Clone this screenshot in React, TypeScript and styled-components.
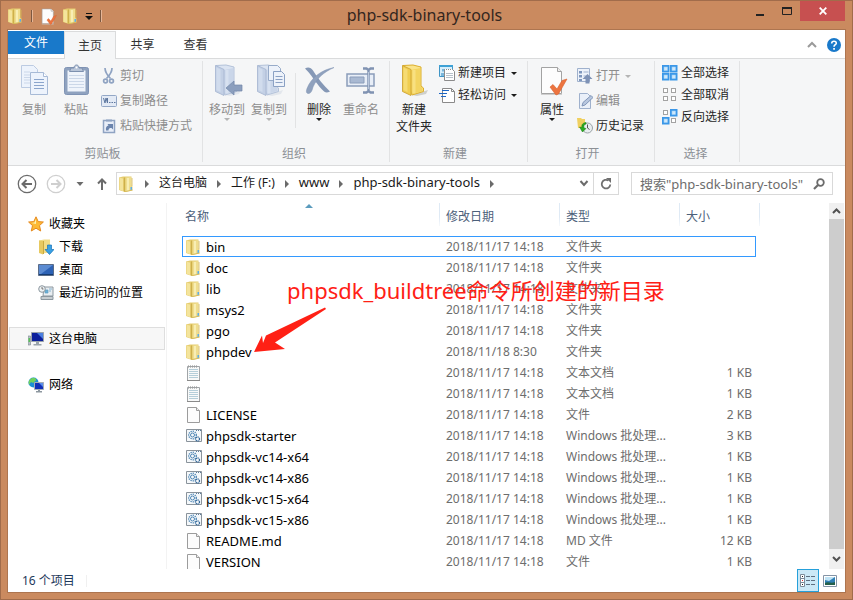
import React from "react";
import styled, { createGlobalStyle, css } from "styled-components";

const GlobalStyle = createGlobalStyle`
  * { box-sizing: border-box; }
  body {
    margin: 0;
    font-family: "Noto Sans", "Noto Sans CJK SC", sans-serif;
    font-size: 12px;
    line-height: 16px;
    color: #000;
  }
  button, input { font: inherit; color: inherit; }
  button { background: none; border: 0; padding: 0; margin: 0; }
  svg { display: block; flex: none; }
`;

/* ---------- window frame ---------- */

const Window = styled.div`
  height: 100vh;
  display: flex;
  flex-direction: column;
  background: #ca8a5f;
  border: 1px solid #a16c4b;
  padding: 0 7px 7px;
  overflow: hidden;
`;

const TitleBar = styled.header`
  display: grid;
  grid-template-columns: 1fr auto 1fr;
  height: 29px;
  flex: none;
`;

const QuickAccess = styled.div`
  display: flex;
  align-items: center;
  gap: 6px;
`;

const QuickDivider = styled.span`
  width: 1px;
  height: 12px;
  margin: 0 1px;
  background: #7d5840;
  box-shadow: 1px 0 #e6b697;
`;

const Title = styled.h1`
  margin: 0;
  padding-right: 4px;
  font-size: 16px;
  font-weight: 400;
  line-height: 28px;
  color: #33261e;
`;

const Caption = styled.div`
  display: flex;
  justify-content: flex-end;
  align-items: flex-start;
`;

const CaptionButton = styled.button<{ $close?: boolean }>`
  width: ${(p) => (p.$close ? 45 : 27)}px;
  height: 20px;
  display: flex;
  align-items: center;
  justify-content: center;
  background: ${(p) => (p.$close ? "#c75050" : "transparent")};
`;

const Client = styled.div`
  flex: 1;
  min-height: 0;
  display: flex;
  flex-direction: column;
  background: #fff;
  outline: 1px solid #ad7550;
`;

/* ---------- ribbon ---------- */

const Tabs = styled.nav`
  display: flex;
  height: 27px;
  flex: none;
  margin-top: 1px;
`;

const FileTab = styled.button`
  width: 56px;
  height: 23px;
  background: #1979ca;
  color: #fff;
`;

const Tab = styled.button<{ $active?: boolean }>`
  width: ${(p) => (p.$active ? 52 : 53)}px;
  height: 28px;
  color: #333;
  ${(p) =>
    p.$active &&
    css`
      background: #f5f6f7;
      border: 1px solid #dadbdc;
      border-bottom: 0;
      z-index: 1;
    `}
`;

const TabTools = styled.div`
  display: flex;
  align-items: center;
  gap: 10px;
  margin-left: auto;
  padding-right: 4px;
`;

const Ribbon = styled.section`
  display: flex;
  flex: none;
  height: 108px;
  background: #f5f6f7;
  border-top: 1px solid #dadbdc;
  border-bottom: 1px solid #dadbdc;
  padding: 2px 0 3px;
`;

const Group = styled.div<{ $start?: number; $end?: number }>`
  display: flex;
  flex-direction: column;
  justify-content: space-between;
  border-right: 1px solid #e2e3e4;
  padding: 0 ${(p) => p.$end ?? 10}px 0 ${(p) => p.$start ?? 3}px;
`;

const GroupBody = styled.div`
  display: flex;
  align-items: flex-start;
`;

const GroupLabel = styled.div`
  text-align: center;
  color: #8c9095;
`;

const GroupDivider = styled.span`
  width: 1px;
  height: 55px;
  margin: 12px 2px 0 5px;
  background: #e2e3e4;
`;

const LargeButton = styled.button<{ $off?: boolean }>`
  width: 42px;
  display: flex;
  flex-direction: column;
  align-items: center;
  padding-top: 3px;
  gap: 5px;
  line-height: 17px;
  white-space: nowrap;
  color: ${(p) => (p.$off ? "#8d8d8d" : "#262626")};
`;

const LargeLabel = styled.span`
  display: flex;
  flex-direction: column;
  align-items: center;
`;

const SmallStack = styled.div<{ $loose?: boolean; $alone?: boolean }>`
  display: flex;
  flex-direction: column;
  gap: ${(p) => (p.$loose ? 9 : 6)}px;
  padding-top: ${(p) => (p.$loose ? 7 : 4)}px;
  padding-left: ${(p) => (p.$alone ? 0 : 4)}px;
`;

const SmallButton = styled.button<{ $off?: boolean }>`
  display: flex;
  align-items: center;
  gap: 3px;
  height: 16px;
  white-space: nowrap;
  color: ${(p) => (p.$off ? "#8d8d8d" : "#262626")};
`;

const Arrow = styled.svg`
  margin-left: 2px;
`;

/* ---------- address row ---------- */

const AddressRow = styled.div`
  display: flex;
  align-items: center;
  flex: none;
  height: 37px;
  padding: 0 12px 2px 9px;
`;

const RoundNav = styled.div`
  display: flex;
  align-items: center;
  gap: 9px;
  margin-right: 8px;
`;

const IconButton = styled.button`
  display: flex;
  align-items: center;
  justify-content: center;
`;

const AddressBox = styled.div`
  flex: 1;
  min-width: 0;
  height: 23px;
  display: flex;
  align-items: stretch;
  border: 1px solid #d9d9d9;
  padding-left: 2px;
  font-size: 13px;
`;

const Crumbs = styled.ol`
  flex: 1;
  display: flex;
  align-items: center;
  list-style: none;
  margin: 0;
  padding: 0;
`;

const Crumb = styled.li`
  display: flex;
  align-items: center;
`;

const CrumbLink = styled.a<{ $cjk?: boolean }>`
  font-size: ${(p) => (p.$cjk ? 12 : 13)}px;
  line-height: 19px;
  padding-bottom: 2px;
  color: #1a1a1a;
  text-decoration: none;
  white-space: nowrap;
`;

const CrumbArrow = styled.svg`
  margin: 0 9px;
`;

const BoxButton = styled(IconButton)<{ $ruled?: boolean }>`
  width: ${(p) => (p.$ruled ? 25 : 18)}px;
  border-left: ${(p) => (p.$ruled ? "1px solid #d9d9d9" : "0")};
`;

const SearchBox = styled.label`
  display: flex;
  align-items: center;
  width: 202px;
  height: 23px;
  margin-left: 12px;
  padding: 0 7px 0 8px;
  border: 1px solid #d9d9d9;
  input {
    flex: 1;
    min-width: 0;
    border: 0;
    padding: 0;
    outline: 0;
    background: none;
    font-size: 13px;
  }
  input::placeholder { color: #6d6d6d; opacity: 1; }
`;

/* ---------- main area ---------- */

const Main = styled.main`
  flex: 1;
  min-height: 0;
  display: flex;
  padding-right: 1px;
`;

const SidePane = styled.nav`
  width: 159px;
  flex: none;
  padding: 9px 1px 0;
  border-right: 1px solid #f3f3f3;
  display: flex;
  flex-direction: column;
  gap: 23px;
`;

const TreeList = styled.div`
  display: flex;
  flex-direction: column;
`;

const TreeItem = styled.a<{ $child?: boolean; $selected?: boolean }>`
  display: flex;
  align-items: center;
  gap: 5px;
  height: 23px;
  padding-left: ${(p) => (p.$child ? 28 : 18)}px;
  border: 1px solid ${(p) => (p.$selected ? "#dedede" : "transparent")};
  background: ${(p) => (p.$selected ? "#f7f7f7" : "transparent")};
  color: #000;
  text-decoration: none;
  white-space: nowrap;
`;

const ListPane = styled.section`
  position: relative;
  flex: 1;
  min-width: 0;
  overflow: hidden;
  padding-left: 15px;
`;

const FileTable = styled.table`
  width: 574px;
  table-layout: fixed;
  border-collapse: collapse;
  line-height: 14px;
`;

const HeadCell = styled.th<{ $w: number; $first?: boolean; $last?: boolean }>`
  position: relative;
  width: ${(p) => p.$w}px;
  height: 33px;
  padding: 7px 0 0 ${(p) => (p.$first ? 3 : 6)}px;
  vertical-align: top;
  text-align: left;
  font-weight: 400;
  color: #4c607a;
  &::after {
    content: "";
    position: absolute;
    top: 0;
    right: ${(p) => (p.$last ? -4 : 0)}px;
    width: 1px;
    height: 23px;
    background: linear-gradient(#dfeaf5 60%, #f6f9fc);
  }
`;

const SortMark = styled.svg`
  position: absolute;
  top: 1px;
  left: 123px;
`;

const FileRow = styled.tr<{ $focused?: boolean }>`
  height: 21px;
  ${(p) =>
    p.$focused &&
    css`
      outline: 1px solid #3399ff;
      outline-offset: -1px;
    `}
`;

const Cell = styled.td<{ $right?: boolean }>`
  padding: 0 ${(p) => (p.$right ? 4 : 0)}px 0 6px;
  color: #6d6d6d;
  text-align: ${(p) => (p.$right ? "right" : "left")};
  white-space: nowrap;
`;

const NameCell = styled.td`
  padding: 0 0 0 4px;
`;

const FileName = styled.span`
  display: flex;
  align-items: center;
  gap: 4px;
  font-size: 13px;
`;

const Note = styled.p`
  position: absolute;
  left: 120px;
  top: 73px;
  margin: 0;
  font-size: 22px;
  line-height: 28px;
  color: #ff2015;
  white-space: nowrap;
`;

const NoteArrow = styled.svg`
  position: absolute;
  left: 85px;
  top: 101px;
`;

const ScrollBar = styled.div`
  width: 15px;
  display: flex;
  flex-direction: column;
  background: #f0f0f0;
`;

const ScrollButton = styled(IconButton)<{ $end?: boolean }>`
  height: ${(p) => (p.$end ? 20 : 16)}px;
`;

const ScrollThumb = styled.div`
  flex: 1;
  background: #cdcdcd;
`;

const StatusBar = styled.footer`
  display: flex;
  align-items: center;
  flex: none;
  height: 23px;
  padding: 0 4px 0 14px;
  color: #1e395b;
`;

const StatusText = styled.span`
  padding-right: 11px;
  border-right: 1px solid #f0f0f0;
  line-height: 12px;
`;

const ViewButtons = styled.div`
  margin-left: auto;
  display: flex;
`;

const ViewButton = styled(IconButton)<{ $on?: boolean }>`
  width: 22px;
  height: 23px;
  border: 1px solid ${(p) => (p.$on ? "#26a0da" : "transparent")};
  background: ${(p) => (p.$on ? "#cbe8f6" : "transparent")};
`;

/* ---------- icons ---------- */

const FolderIcon = () => (
  <svg width="16" height="16" viewBox="0 0 16 16">
    <path d="M0 1.500 4 .5h8.500v9l1 1v4L6 16 0 14z" fill="#e6cd70" />
    <path d="M6.500 1.500 12 1v9l1 1v3l-6.500 1.500z" fill="#efdd8e" />
    <path d="M9 2v12.500" stroke="#f8eeb4" strokeWidth="2" />
    <path d="M.5 1.800 4 2.600V15L.5 13.800z" fill="#f4e49c" />
    <path d="M5.500 1.500v14.200" stroke="#cdb04a" strokeWidth="1.200" />
    <path d="M11.500 11h1.500v2.800l-1.500.4z" fill="#5badea" />
    <path d="m6 15.700 7.500-1.700M13 2v8" fill="none" stroke="#d3b655" strokeWidth=".8" />
  </svg>
);

const BigFolder = ({ off, children }: { off?: boolean; children?: React.ReactNode }) => {
  const c = off
    ? ["#c3d0e5", "#dbe4f2", "#b3c2d9", "#a3b4cf"]
    : ["#f0cd50", "#fae48a", "#dcae2c", "#c99d2b"];
  return (
    <svg width="32" height="32" viewBox="0 0 32 32">
      <path d="M14 31 30 26l-2 4-9 2z" fill={off ? "#e3e7ed" : "#cfd0cc"} />
      <path d="M5 1.500 15 1l8 2v19l2.500 2v3.500L14 31z" fill={c[1]} stroke={c[2]} />
      <path d="m13 6 9.500-2v18l2 2v3L13 30.500z" fill={c[0]} opacity=".7" />
      <path d="M16 6v23" stroke={c[1]} strokeWidth="3" opacity=".8" />
      <path d="m4.500 1.500 8.500 4V31.500l-8.500-4z" fill={c[0]} stroke={c[3]} strokeWidth=".8" />
      <path d="m5.500 3.500 4 2v22.500l-4-2z" fill={c[1]} opacity=".6" />
      {children}
    </svg>
  );
};

const CopyIcon = () => (
  <svg width="32" height="32" viewBox="0 0 32 32" stroke="#a7bad6" fill="#edf3fc">
    <path d="M3.500 1.500h12l4 4v18h-16z" stroke="#bccbe2" />
    <path d="M6 8h6M6 11h6M6 13.500h6M6 16h6M6 19h6" stroke="#cbd7e9" />
    <path d="M12.500 8.500h13l4 4v18h-17z" />
    <path d="M25.500 8.500v4h4" fill="#fff" />
    <path d="M16 15.500h10M16 18.500h10M16 21.500h10M16 24.500h10" stroke="#8ba5cc" />
  </svg>
);

const PasteIcon = () => (
  <svg width="32" height="32" viewBox="0 0 32 32">
    <rect x="4.500" y="3.500" width="24" height="27" rx="2" fill="#8fa2bf" stroke="#7f93b4" />
    <path d="M7.500 6.500h18v21h-18z" fill="#eff4fb" />
    <path d="M9 11.500h15M9 14.500h15M9 17.500h15M9 20.500h15M9 23.500h15" stroke="#cbd7e8" />
    <path d="M9.500 7.500 11 4h3c0-4 5-4 5 0h3l1.500 3.500z" fill="#b8c5d8" stroke="#7c90af" />
    <circle cx="16.500" cy="3.500" r="1" fill="#fff" />
  </svg>
);

const CutIcon = () => (
  <svg width="16" height="16" viewBox="0 0 16 16" fill="none" stroke="#8fa3c2" strokeWidth="1.700">
    <path d="M4 0c0 4 2 7 5.500 10.500M11 0c0 4-2 7-5.500 10.500" />
    <circle cx="4.500" cy="13" r="1.900" />
    <circle cx="10.500" cy="13" r="1.900" />
  </svg>
);

const PathIcon = () => (
  <svg width="16" height="16" viewBox="0 0 16 16" fill="none">
    <rect x=".5" y="2.500" width="15" height="11" rx="1" fill="#e3eaf5" stroke="#93a7c6" />
    <path d="m2.500 5 1.500 5 1-5 1.500 5V5" stroke="#5d779f" />
    <path d="M8 9.500h1.500M10.500 9.500H12M13 9.500h1.500" stroke="#5d779f" />
  </svg>
);

const ShortcutIcon = () => (
  <svg width="16" height="16" viewBox="0 0 16 16">
    <path d="M2.500 2.500h11v12h-11z" fill="#e8eef8" stroke="#8fa3c2" strokeWidth="1.500" />
    <path d="M5 1.500h6v2H5z" fill="#8fa3c2" />
    <path d="M5 12.500c-.5-3 .5-4.500 2.500-5L6.500 6H12v5.500l-1.500-1.500c-2 0-3 .5-3 2.500z" fill="#6b84ad" />
  </svg>
);

const DeleteIcon = () => (
  <svg width="32" height="32" viewBox="0 0 32 32">
    <path d="M2 4.500C5 2.500 8 3.500 10 6.500c5 8 10 14 17 21-4 2-5 1-8-2C12 18 8 10 2 4.500z" fill="#8598b6" />
    <path d="M31 3.500C21 8 14 14 10 23c-1 4-2 6-4 6.500-3 0-3-2-2-5C8 14 18 6 31 3.500z" fill="#8fa1bd" stroke="#7e92b2" strokeWidth=".5" />
  </svg>
);

const RenameIcon = () => (
  <svg width="32" height="32" viewBox="0 0 32 32" fill="none">
    <path d="M2 10h27v12H2z" fill="#e8eef7" stroke="#8b9dba" strokeWidth="1.500" />
    <path d="M5 13h14v6H5z" fill="#a9b9d2" stroke="#8b9dba" />
    <path d="M18 4.500h3.500l2 1.500 2-1.500H29M23.500 5v23M18 28.500h3.500l2-1.500 2 1.500H29" stroke="#8093b2" strokeWidth="2.400" />
    <path d="M23.500 8v17" stroke="#b8c6da" />
  </svg>
);

const NewItemIcon = () => (
  <svg width="16" height="16" viewBox="0 0 16 16">
    <path d="M.5.5h13v11H.5z" fill="#d6eefb" stroke="#3f95c6" />
    <path d="M0 0h14v2H0z" fill="#3ea1d5" />
    <path d="M3 4h3v2.500H3zM2 8h3v3H2z" fill="#7bb7dc" />
    <path d="M5.500 4.500h8l2 2v9h-10z" fill="#fff" stroke="#8b8b8b" />
    <path d="M7 8.500h7M7 10.500h7M7 12.500h7" stroke="#b7c1ca" />
    <path d="M6 4.500h7" stroke="#fff" strokeDasharray="1 1" />
  </svg>
);

const EasyIcon = () => (
  <svg width="16" height="16" viewBox="0 0 16 16">
    <path d="M3.500 1.500h9l3 3v11h-12z" fill="#fff" stroke="#8a8a8a" />
    <path d="M12.500 1.500v3h3" fill="none" stroke="#8a8a8a" />
    <path d="M3 3.500h7M0 6.500h8M2 9.500h5" stroke="#1c66c4" />
  </svg>
);

const PropsIcon = ({ size = 32 }: { size?: number }) => (
  <svg width={size} height={size} viewBox="0 0 32 32">
    <path d="M5 30.500h21" stroke="#cfcfcf" />
    <path d="M5.500 3.500h16l4 4v22h-20z" fill="#fdfdfd" stroke="#a3a3a3" />
    <path d="M21.500 3.500v4h4" fill="#eee" stroke="#a3a3a3" />
    <path d="m14 23 3-2.500 4 4.500 5-8.500 5-1.500-8.500 15-2.500 1z" fill="#ec7440" stroke="#d9602b" strokeWidth=".6" />
  </svg>
);

const OpenIcon = () => (
  <svg width="16" height="16" viewBox="0 0 16 16">
    <path d="M.5.5h12v13H.5z" fill="#edf2fa" stroke="#9fb1cd" />
    <path d="M2 3h3v2.500H2zM2 7h3v2.500H2zM2 11h3v2H2z" fill="#7f97bd" />
    <path d="M6.500 4h5M6.500 8h3" stroke="#9fb1cd" />
    <path d="m10.500 6 5 5h-3v4.500h-4V11h-3z" fill="#7e92b6" />
  </svg>
);

const EditIcon = () => (
  <svg width="16" height="16" viewBox="0 0 16 16">
    <path d="M2.500.5h8l3 3v12h-11z" fill="#eaf0f9" stroke="#9fb1cd" />
    <path d="m5 13 1-3.500 8-7 2 2-8 7.500z" fill="#b8c7df" stroke="#8196b9" />
  </svg>
);

const HistoryIcon = () => (
  <svg width="16" height="16" viewBox="0 0 16 16">
    <path d="M0 0h4l1 1h3v9H1z" fill="#f0d060" />
    <circle cx="10.500" cy="10" r="5" fill="#e9eef0" stroke="#9ba3a6" />
    <path d="M10.500 6.500V10l2 1.500" fill="none" stroke="#555" />
    <path d="M9 4.500C5 5 4.500 7.500 5 9.500L2.500 9l3 5 3.500-3.500-2-.5c-.5-2 0-3.500 2-4z" fill="#2cab23" stroke="#12780f" strokeWidth=".5" />
  </svg>
);

type Cells = [boolean, boolean, boolean, boolean];
const SelectIcon = ({ on }: { on: Cells }) => (
  <svg width="16" height="16" viewBox="0 0 16 16">
    {on.map((lit, i) => {
      const x = (i % 2) * 8;
      const y = i < 2 ? 0 : 8;
      return lit ? (
        <g key={i}>
          <rect x={x} y={y} width="7.500" height="7.500" fill="#3b97e8" />
          <rect x={x + 2} y={y + 2} width="3.500" height="3.500" fill="#cfe8fb" stroke="#9dd0f5" strokeWidth=".6" />
        </g>
      ) : (
        <rect key={i} x={x + 1.500} y={y + 1.500} width="4" height="4" fill="#fff" stroke="#a3a3a3" />
      );
    })}
  </svg>
);

const Caret = ({ off }: { off?: boolean }) => (
  <svg width="6" height="3" viewBox="0 0 6 3">
    <path d="M0 0h6L3 3z" fill={off ? "#b4b4b4" : "#1c1c1c"} />
  </svg>
);

const InlineCaret = ({ off }: { off?: boolean }) => (
  <Arrow width="6" height="3" viewBox="0 0 6 3">
    <path d="M0 0h6L3 3z" fill={off ? "#b4b4b4" : "#1c1c1c"} />
  </Arrow>
);

const NavCircle = ({ off, flip }: { off?: boolean; flip?: boolean }) => (
  <svg width="20" height="20" viewBox="0 0 20 20" fill="none" stroke={off ? "#cfcfcf" : "#6b6b6b"}>
    <circle cx="10" cy="10" r="8.700" strokeWidth="1.300" />
    <path d={flip ? "M5 10h9M10.500 6l4 4-4 4" : "M15 10H6M9.500 6l-4 4 4 4"} strokeWidth="2" />
  </svg>
);

const StarIcon = () => (
  <svg width="16" height="16" viewBox="0 0 16 16">
    <path d="m8 .8 2.200 4.800 5.200.4-3.900 3.600 1.200 5.400L8 12.200 3.300 15l1.200-5.400L.6 6l5.200-.4z" fill="#fdb935" stroke="#e58a20" />
    <path d="M8 3v5L3.500 7l3-.6z" fill="#fff0b0" />
  </svg>
);

const DownloadIcon = () => (
  <svg width="16" height="16" viewBox="0 0 16 16">
    <path d="M1 1.500 6 .5h6v13l-8 1z" fill="#f1dc87" />
    <path d="M1 1.500 5 2v13.500L1 14z" fill="#e7c960" />
    <path d="M5.500 2v13" stroke="#c9a940" />
    <path d="M9.500 6h4v4.500H16l-4.500 5-4.500-5h2.500z" fill="#39a0e4" stroke="#1973b8" strokeWidth=".7" />
  </svg>
);

const DesktopIcon = () => (
  <svg width="16" height="16" viewBox="0 0 16 16">
    <path d="M.5 2.500h15v11H.5z" fill="#2d62b5" stroke="#5a6c88" />
    <path d="M1 3h14L3 12H1z" fill="#5b8bd2" />
    <path d="M1 12.500h14" stroke="#153c73" />
  </svg>
);

const RecentIcon = () => (
  <svg width="16" height="16" viewBox="0 0 16 16">
    <path d="M6 2h9v9H5z" fill="#e8edf1" stroke="#8c979f" />
    <path d="M7 5h3v3H7zM11 4h3M11 6h2" fill="#6ab0d6" stroke="#5f9fc3" strokeWidth=".7" />
    <path d="M3 11.500h12v3H3z" fill="#c7cdd1" stroke="#8c979f" />
    <circle cx="4" cy="4" r="3.300" fill="#eef2f4" stroke="#8c979f" />
    <path d="M4 2v2h1.500" fill="none" stroke="#555" strokeWidth=".8" />
  </svg>
);

const ComputerIcon = () => (
  <svg width="16" height="16" viewBox="0 0 16 16">
    <path d="M0 5h2.500v9H0z" fill="#b8c0c6" stroke="#7a858d" strokeWidth=".6" />
    <path d="M.6 7h1.300v4H.6z" fill="#4dc04b" />
    <path d="M3.500 1.500h12v9h-12z" fill="#0c1f9c" stroke="#9aa3ab" />
    <path d="m9 2 6 0v6z" fill="#4a7ee0" />
    <path d="M8 11h3v2H8zM5.500 13h8v1.500h-8z" fill="#9aa3ab" />
  </svg>
);

const NetworkIcon = () => (
  <svg width="16" height="16" viewBox="0 0 16 16">
    <circle cx="5.500" cy="5.500" r="5" fill="#1b8fd6" />
    <path d="M3 1.500c3-2 6 0 5 2L5 6 3 5 1 8C0 5 1 3 3 1.500z" fill="#6fd15d" />
    <path d="M6.500 5.500h9v7h-9z" fill="#1130b8" stroke="#a5adb5" />
    <path d="m11 6 4 0v4z" fill="#5b8eea" />
    <path d="M10 13h2v1h-2zM8 14h6v1.500H8z" fill="#8d979f" />
  </svg>
);

const TextDocIcon = () => (
  <svg width="16" height="16" viewBox="0 0 16 16">
    <path d="M1.500 1.500h12v14h-12z" fill="#f8f9f9" stroke="#a1a5a8" />
    <path d="M3 4.500h9M3 6.500h9M3 8.500h9M3 10.500h9M3 12.500h9" stroke="#b5ced9" />
    <path d="M2.500 0v3M4.500 0v3M6.500 0v3M8.500 0v3M10.500 0v3" stroke="#9b9b9b" strokeWidth=".6" />
    <path d="M1 15.500h13" stroke="#8a8a8a" />
  </svg>
);

const BlankIcon = () => (
  <svg width="16" height="16" viewBox="0 0 16 16">
    <path d="M1.500.5h9l3 3v12h-12z" fill="#fcfcfc" stroke="#9c9c9c" />
    <path d="M10.500.5v3h3" fill="#eee" stroke="#9c9c9c" />
  </svg>
);

const BatchIcon = () => (
  <svg width="16" height="16" viewBox="0 0 16 16" fill="none">
    <path d="M.5 1.500h15v12H.5z" fill="#f5f8fa" stroke="#8a939b" />
    <path d="M10 2.500h5" stroke="#5d7e9d" strokeDasharray="1 1" />
    <circle cx="6.500" cy="7" r="3.800" stroke="#4b84b4" strokeWidth="1.300" strokeDasharray="1.300 .9" />
    <circle cx="6.500" cy="7" r="2" stroke="#4b84b4" />
    <circle cx="11.500" cy="11" r="2" stroke="#35699a" strokeWidth="1.300" strokeDasharray="1.100 .6" />
  </svg>
);

/* ---------- data ---------- */

type Kind = "folder" | "text" | "blank" | "batch";
type Entry = [kind: Kind, name: string, type: string, size: string, date?: string];

const entries: Entry[] = [
  ["folder", "bin", "文件夹", ""],
  ["folder", "doc", "文件夹", ""],
  ["folder", "lib", "文件夹", ""],
  ["folder", "msys2", "文件夹", ""],
  ["folder", "pgo", "文件夹", ""],
  ["folder", "phpdev", "文件夹", "", "2018/11/18 8:30"],
  ["text", "", "文本文档", "1 KB"],
  ["text", "", "文本文档", "1 KB"],
  ["blank", "LICENSE", "文件", "2 KB"],
  ["batch", "phpsdk-starter", "Windows 批处理...", "3 KB"],
  ["batch", "phpsdk-vc14-x64", "Windows 批处理...", "1 KB"],
  ["batch", "phpsdk-vc14-x86", "Windows 批处理...", "1 KB"],
  ["batch", "phpsdk-vc15-x64", "Windows 批处理...", "1 KB"],
  ["batch", "phpsdk-vc15-x86", "Windows 批处理...", "1 KB"],
  ["blank", "README.md", "MD 文件", "12 KB"],
  ["blank", "VERSION", "文件", "1 KB"],
];

const kindIcon: Record<Kind, React.FC> = {
  folder: FolderIcon,
  text: TextDocIcon,
  blank: BlankIcon,
  batch: BatchIcon,
};

const crumbs = ["这台电脑", "工作 (F:)", "www", "php-sdk-binary-tools"];

const CrumbMark = () => (
  <CrumbArrow width="6" height="8" viewBox="0 0 6 8">
    <path d="M1 0v8l4-4z" fill="#6a6a6a" />
  </CrumbArrow>
);

export default function App() {
  return (
    <Window>
      <GlobalStyle />
      <TitleBar>
        <QuickAccess>
          <FolderIcon />
          <QuickDivider />
          <IconButton aria-label="属性"><PropsIcon size={18} /></IconButton>
          <IconButton aria-label="新建文件夹"><FolderIcon /></IconButton>
          <IconButton aria-label="自定义快速访问工具栏">
            <svg width="8" height="8" viewBox="0 0 8 8">
              <path d="M1 1.500h6" stroke="#111" />
              <path d="M0 4h8L4 8z" fill="#111" />
            </svg>
          </IconButton>
          <QuickDivider />
        </QuickAccess>
        <Title>php-sdk-binary-tools</Title>
        <Caption>
          <CaptionButton aria-label="最小化">
            <svg width="8" height="14" viewBox="0 0 8 14"><path d="M0 11h8" stroke="#222" strokeWidth="2" /></svg>
          </CaptionButton>
          <CaptionButton aria-label="最大化">
            <svg width="10" height="8" viewBox="0 0 10 8"><path d="M.5 1h9v6.500h-9z" fill="none" stroke="#222" /><path d="M0 1h10" stroke="#222" strokeWidth="2" /></svg>
          </CaptionButton>
          <CaptionButton $close aria-label="关闭">
            <svg width="8" height="8" viewBox="0 0 8 8"><path d="m.7.7 6.600 6.600M7.300.7.7 7.300" stroke="#fff" strokeWidth="1.800" /></svg>
          </CaptionButton>
        </Caption>
      </TitleBar>

      <Client>
        <Tabs>
          <FileTab>文件</FileTab>
          <Tab $active>主页</Tab>
          <Tab>共享</Tab>
          <Tab>查看</Tab>
          <TabTools>
            <IconButton aria-label="最小化功能区">
              <svg width="10" height="7" viewBox="0 0 10 7"><path d="m1 6 4-4 4 4" fill="none" stroke="#9a9a9a" strokeWidth="2" /></svg>
            </IconButton>
            <IconButton aria-label="帮助">
              <svg width="14" height="14" viewBox="0 0 14 14">
                <circle cx="7" cy="7" r="7" fill="#1979ca" />
                <path d="M4.700 5.400C4.700 2.500 9.300 2.500 9.300 5.200 9.300 6.700 7 6.800 7 8.800" fill="none" stroke="#fff" strokeWidth="1.600" />
                <path d="M6.200 10h1.700v1.700H6.200z" fill="#fff" />
              </svg>
            </IconButton>
          </TabTools>
        </Tabs>

        <Ribbon>
          <Group $start={5}>
            <GroupBody>
              <LargeButton $off><CopyIcon /><LargeLabel>复制</LargeLabel></LargeButton>
              <LargeButton $off><PasteIcon /><LargeLabel>粘贴</LargeLabel></LargeButton>
              <SmallStack $loose>
                <SmallButton $off><CutIcon />剪切</SmallButton>
                <SmallButton $off><PathIcon />复制路径</SmallButton>
                <SmallButton $off><ShortcutIcon />粘贴快捷方式</SmallButton>
              </SmallStack>
            </GroupBody>
            <GroupLabel>剪贴板</GroupLabel>
          </Group>
          <Group $end={7}>
            <GroupBody>
              <LargeButton $off>
                <BigFolder off>
                  <path d="m15 24 8-7v4h8v6h-8v4z" fill="#8c9fbe" stroke="#7288ab" strokeWidth=".7" />
                </BigFolder>
                <LargeLabel>移动到<Caret off /></LargeLabel>
              </LargeButton>
              <LargeButton $off>
                <BigFolder off>
                  <path d="M15.500 1.500h9l3 3v12h-12z" fill="#edf2fa" stroke="#97abc9" />
                  <path d="M20.500 7.500h8l3 3v12h-11z" fill="#edf2fa" stroke="#8ba1c4" />
                  <path d="M22.500 12.500h7M22.500 15.500h7M22.500 18.500h7" stroke="#8ba1c4" />
                </BigFolder>
                <LargeLabel>复制到<Caret off /></LargeLabel>
              </LargeButton>
              <GroupDivider />
              <LargeButton><DeleteIcon /><LargeLabel>删除<Caret /></LargeLabel></LargeButton>
              <LargeButton $off><RenameIcon /><LargeLabel>重命名</LargeLabel></LargeButton>
            </GroupBody>
            <GroupLabel>组织</GroupLabel>
          </Group>
          <Group>
            <GroupBody>
              <LargeButton>
                <BigFolder />
                <LargeLabel><span>新建</span><span>文件夹</span></LargeLabel>
              </LargeButton>
              <SmallStack>
                <SmallButton><NewItemIcon />新建项目<InlineCaret /></SmallButton>
                <SmallButton><EasyIcon />轻松访问<InlineCaret /></SmallButton>
              </SmallStack>
            </GroupBody>
            <GroupLabel>新建</GroupLabel>
          </Group>
          <Group>
            <GroupBody>
              <LargeButton><PropsIcon /><LargeLabel>属性<Caret /></LargeLabel></LargeButton>
              <SmallStack $loose>
                <SmallButton $off><OpenIcon />打开<InlineCaret off /></SmallButton>
                <SmallButton $off><EditIcon />编辑</SmallButton>
                <SmallButton><HistoryIcon />历史记录</SmallButton>
              </SmallStack>
            </GroupBody>
            <GroupLabel>打开</GroupLabel>
          </Group>
          <Group $start={7}>
            <GroupBody>
              <SmallStack $alone>
                <SmallButton><SelectIcon on={[true, true, true, true]} />全部选择</SmallButton>
                <SmallButton><SelectIcon on={[false, false, false, false]} />全部取消</SmallButton>
                <SmallButton><SelectIcon on={[false, true, true, false]} />反向选择</SmallButton>
              </SmallStack>
            </GroupBody>
            <GroupLabel>选择</GroupLabel>
          </Group>
        </Ribbon>

        <AddressRow>
          <RoundNav>
            <IconButton aria-label="返回"><NavCircle /></IconButton>
            <IconButton aria-label="前进"><NavCircle off flip /></IconButton>
            <IconButton aria-label="最近浏览的位置">
              <svg width="10" height="4" viewBox="0 0 10 4"><path d="M1.500 0h7L5 4z" fill="#6b6b6b" /></svg>
            </IconButton>
            <IconButton aria-label="上移">
              <svg width="14" height="14" viewBox="0 0 14 14" fill="none" stroke="#6b6b6b" strokeWidth="2"><path d="M8 13V3M4 6.500l4-4 4 4" /></svg>
            </IconButton>
          </RoundNav>
          <AddressBox>
            <Crumbs>
              <FolderIcon />
              {crumbs.map((c, i) => (
                <Crumb key={c}>
                  <CrumbMark />
                  <CrumbLink $cjk={i < 2} href="#">{c}</CrumbLink>
                </Crumb>
              ))}
              <Crumb><CrumbMark /></Crumb>
            </Crumbs>
            <BoxButton aria-label="以前的位置">
              <svg width="10" height="7" viewBox="0 0 10 7"><path d="m1.500 1 3.500 4 3.500-4" fill="none" stroke="#6b6b6b" strokeWidth="2" /></svg>
            </BoxButton>
            <BoxButton $ruled aria-label="刷新">
              <svg width="12" height="12" viewBox="0 0 12 12">
                <path d="M8.500 2.600A4.300 4.300 0 1 0 10.300 6.500" fill="none" stroke="#6f6f6f" strokeWidth="1.800" />
                <path d="M6 0h5v5z" fill="#6f6f6f" />
              </svg>
            </BoxButton>
          </AddressBox>
          <SearchBox>
            <input type="text" aria-label="搜索" placeholder={'搜索"php-sdk-binary-tools"'} />
            <svg width="12" height="12" viewBox="0 0 12 12" fill="none" stroke="#6b6b6b">
              <circle cx="7.500" cy="4.500" r="3.300" strokeWidth="1.800" />
              <path d="M5 7 1 11" strokeWidth="2.200" />
            </svg>
          </SearchBox>
        </AddressRow>

        <Main>
          <SidePane>
            <TreeList>
              <TreeItem href="#"><StarIcon />收藏夹</TreeItem>
              <TreeItem href="#" $child><DownloadIcon />下载</TreeItem>
              <TreeItem href="#" $child><DesktopIcon />桌面</TreeItem>
              <TreeItem href="#" $child><RecentIcon />最近访问的位置</TreeItem>
            </TreeList>
            <TreeItem href="#" $selected><ComputerIcon />这台电脑</TreeItem>
            <TreeItem href="#"><NetworkIcon />网络</TreeItem>
          </SidePane>

          <ListPane>
            <FileTable>
              <thead>
                <tr>
                  <HeadCell $w={258} $first>
                    名称
                    <SortMark width="8" height="4" viewBox="0 0 8 4"><path d="M4 0l4 4H0z" fill="#5b9bbd" /></SortMark>
                  </HeadCell>
                  <HeadCell $w={120}>修改日期</HeadCell>
                  <HeadCell $w={120}>类型</HeadCell>
                  <HeadCell $w={76} $last>大小</HeadCell>
                </tr>
              </thead>
              <tbody>
                {entries.map(([kind, name, type, size, date], i) => {
                  const Icon = kindIcon[kind];
                  return (
                    <FileRow key={i} $focused={i === 0}>
                      <NameCell><FileName><Icon />{name}</FileName></NameCell>
                      <Cell>{date ?? "2018/11/17 14:18"}</Cell>
                      <Cell>{type}</Cell>
                      <Cell $right>{size}</Cell>
                    </FileRow>
                  );
                })}
              </tbody>
            </FileTable>
            <Note>phpsdk_buildtree命令所创建的新目录</Note>
            <NoteArrow width="76" height="50" viewBox="0 0 76 50">
              <path d="M73 3.500 74 5 23 38.500 33 45 2 48 10 31.500 11 39 14 31.500z" fill="#ff2015" />
            </NoteArrow>
          </ListPane>

          <ScrollBar>
            <ScrollButton aria-label="向上滚动">
              <svg width="9" height="6" viewBox="0 0 9 6"><path d="m1 5 3.500-3.500L8 5" fill="none" stroke="#505050" strokeWidth="2" /></svg>
            </ScrollButton>
            <ScrollThumb />
            <ScrollButton $end aria-label="向下滚动">
              <svg width="9" height="6" viewBox="0 0 9 6"><path d="m1 1 3.500 3.500L8 1" fill="none" stroke="#505050" strokeWidth="2" /></svg>
            </ScrollButton>
          </ScrollBar>
        </Main>

        <StatusBar>
          <StatusText>16 个项目</StatusText>
          <ViewButtons>
            <ViewButton $on aria-label="详细信息">
              <svg width="16" height="13" viewBox="0 0 16 13" fill="none">
                <path d="M.5.5h4v12h-4zM.5 4.500h4M.5 8.500h4" fill="#fff" stroke="#7d8b99" />
                <path d="M2 2.500h1M2 10.500h1" stroke="#222" />
                <path d="M2 6.500h1" stroke="#d33" />
                <path d="M6 2.500h4M11 2.500h4M6 6.500h4M11 6.500h4M6 10.500h4M11 10.500h4" stroke="#5f6f80" />
              </svg>
            </ViewButton>
            <ViewButton aria-label="大图标">
              <svg width="14" height="12" viewBox="0 0 14 12">
                <path d="M.5.5h13v11H.5z" fill="#fff" stroke="#8494a6" />
                <path d="M2 2h10v8H2z" fill="#2f7fb5" />
                <path d="M2 2h10L6 6 2 5z" fill="#bfe3f5" />
                <path d="M2 8c3-2 6 1 10-1v3H2z" fill="#25604a" />
              </svg>
            </ViewButton>
          </ViewButtons>
        </StatusBar>
      </Client>
    </Window>
  );
}
